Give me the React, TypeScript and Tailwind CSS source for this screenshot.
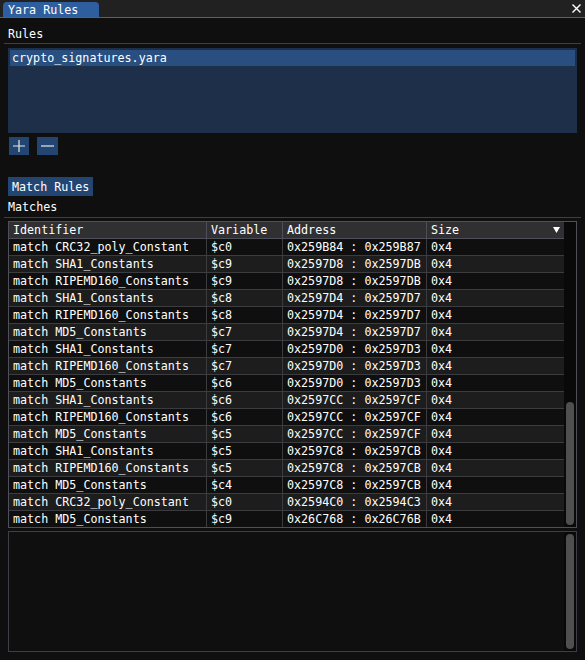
import React from 'react';

type Match = { rule: string; variable: string; start: string; end: string; size: string };

const matches: Match[] = [
  { rule: 'CRC32_poly_Constant', variable: '$c0', start: '0x259B84', end: '0x259B87', size: '0x4' },
  { rule: 'SHA1_Constants', variable: '$c9', start: '0x2597D8', end: '0x2597DB', size: '0x4' },
  { rule: 'RIPEMD160_Constants', variable: '$c9', start: '0x2597D8', end: '0x2597DB', size: '0x4' },
  { rule: 'SHA1_Constants', variable: '$c8', start: '0x2597D4', end: '0x2597D7', size: '0x4' },
  { rule: 'RIPEMD160_Constants', variable: '$c8', start: '0x2597D4', end: '0x2597D7', size: '0x4' },
  { rule: 'MD5_Constants', variable: '$c7', start: '0x2597D4', end: '0x2597D7', size: '0x4' },
  { rule: 'SHA1_Constants', variable: '$c7', start: '0x2597D0', end: '0x2597D3', size: '0x4' },
  { rule: 'RIPEMD160_Constants', variable: '$c7', start: '0x2597D0', end: '0x2597D3', size: '0x4' },
  { rule: 'MD5_Constants', variable: '$c6', start: '0x2597D0', end: '0x2597D3', size: '0x4' },
  { rule: 'SHA1_Constants', variable: '$c6', start: '0x2597CC', end: '0x2597CF', size: '0x4' },
  { rule: 'RIPEMD160_Constants', variable: '$c6', start: '0x2597CC', end: '0x2597CF', size: '0x4' },
  { rule: 'MD5_Constants', variable: '$c5', start: '0x2597CC', end: '0x2597CF', size: '0x4' },
  { rule: 'SHA1_Constants', variable: '$c5', start: '0x2597C8', end: '0x2597CB', size: '0x4' },
  { rule: 'RIPEMD160_Constants', variable: '$c5', start: '0x2597C8', end: '0x2597CB', size: '0x4' },
  { rule: 'MD5_Constants', variable: '$c4', start: '0x2597C8', end: '0x2597CB', size: '0x4' },
  { rule: 'CRC32_poly_Constant', variable: '$c0', start: '0x2594C0', end: '0x2594C3', size: '0x4' },
  { rule: 'MD5_Constants', variable: '$c9', start: '0x26C768', end: '0x26C76B', size: '0x4' },
];

// column grid shared by header and rows
const cols = 'grid grid-cols-[198px_76px_144px_1fr]';

const Separator = ({ className = '' }: { className?: string }) => (
  <div className={`h-px mx-1 bg-[#3e3e47] ${className}`}></div>
);

const Button = ({ children, className = '' }: { children: React.ReactNode; className?: string }) => (
  <div className={`flex items-center justify-center bg-[#234571] text-white ${className}`}>{children}</div>
);

export default function App() {
  return (
    <div
      className="w-[585px] h-[660px] bg-[#0f0f0f] text-[11.7px] leading-[16px] text-white overflow-hidden"
      style={{ fontFamily: '"DejaVu Sans Mono", "Liberation Mono", monospace' }}
    >
      {/* tab bar */}
      <div className="h-[18px] bg-[#212121] flex flex-col">
        <div className="h-[17px] flex items-end justify-between">
          <div className="ml-[3px] w-[96px] h-[15px] rounded-t-[4px] bg-[#2f5e9f] pl-[5px] flex items-center">
            Yara Rules
          </div>
          <svg className="mr-[4px] mb-[4px]" width="9" height="9" viewBox="0 0 9 9">
            <path d="M0.5 0.5 L8.5 8.5 M8.5 0.5 L0.5 8.5" stroke="#ffffff" strokeWidth="1.4" />
          </svg>
        </div>
        <div className="h-px bg-[#3068b5]"></div>
      </div>

      {/* rules */}
      <div className="mt-[8px] h-[16px] px-2 flex items-center">Rules</div>
      <Separator className="mt-[1px]" />
      <div className="mt-[4px] mx-2 h-[85px] bg-[#1d2f49] p-[2px]">
        <div className="h-[16px] bg-[#284f80] pl-[2px] flex items-center">crypto_signatures.yara</div>
      </div>

      <div className="mt-[4px] mx-2 flex gap-[8px] pl-px">
        <Button className="w-[20px] h-[18px]">
          <svg width="12" height="12" viewBox="0 0 12 12">
            <path d="M6 0 V12 M0 6 H12" stroke="#e8e8e8" strokeWidth="1.2" />
          </svg>
        </Button>
        <Button className="w-[21px] h-[18px]">
          <svg width="13" height="2" viewBox="0 0 13 2">
            <path d="M0 1 H13" stroke="#e8e8e8" strokeWidth="1.2" />
          </svg>
        </Button>
      </div>

      <div className="mt-[22px] mx-2 flex">
        <Button className="h-[19px] px-[4px]">Match Rules</Button>
      </div>

      {/* matches */}
      <div className="mt-[3px] h-[16px] px-2 flex items-center">Matches</div>
      <Separator className="mt-[2px]" />

      <div className="mt-[3px] mx-2 h-[307px] border border-[#4f4f59] flex">
        <div className="flex-1 flex flex-col">
          <div className={`${cols} h-[17px] bg-[#303033] border-b border-[#4f4f59]`}>
            <div className="pl-[4px] border-r border-[#4f4f59] flex items-center">Identifier</div>
            <div className="pl-[4px] border-r border-[#4f4f59] flex items-center">Variable</div>
            <div className="pl-[4px] border-r border-[#4f4f59] flex items-center">Address</div>
            <div className="pl-[4px] pr-[4px] flex items-center justify-between">
              <span>Size</span>
              <svg width="7" height="6" viewBox="0 0 7 6">
                <path d="M0 0 H7 L3.5 6 Z" fill="#ffffff" />
              </svg>
            </div>
          </div>
          {matches.map((m, i) => (
            <div
              key={i}
              className={`${cols} h-[17px] ${i % 2 === 1 ? 'bg-[#1d1d1d]' : 'bg-[#0f0f0f]'} ${
                i < matches.length - 1 ? 'border-b border-[#3b3b40]' : ''
              }`}
            >
              <div className="pl-[4px] border-r border-[#3b3b40] flex items-center whitespace-pre">match {m.rule}</div>
              <div className="pl-[4px] border-r border-[#3b3b40] flex items-center">{m.variable}</div>
              <div className="pl-[4px] border-r border-[#3b3b40] flex items-center whitespace-pre">
                {m.start} : {m.end}
              </div>
              <div className="pl-[4px] flex items-center">{m.size}</div>
            </div>
          ))}
        </div>
        <div className="w-[12px] bg-[#090909] flex flex-col justify-end items-center pb-[2px]">
          <div className="w-[8px] h-[123px] rounded-full bg-[#4f4f4f]"></div>
        </div>
      </div>

      {/* output pane */}
      <div className="mt-[3px] mx-2 h-[121px] border border-[#3e3e47] flex justify-end">
        <div className="w-[12px] bg-[#090909] flex flex-col items-center py-[2px]">
          <div className="w-[8px] flex-1 rounded-full bg-[#4f4f4f]"></div>
        </div>
      </div>
    </div>
  );
}
